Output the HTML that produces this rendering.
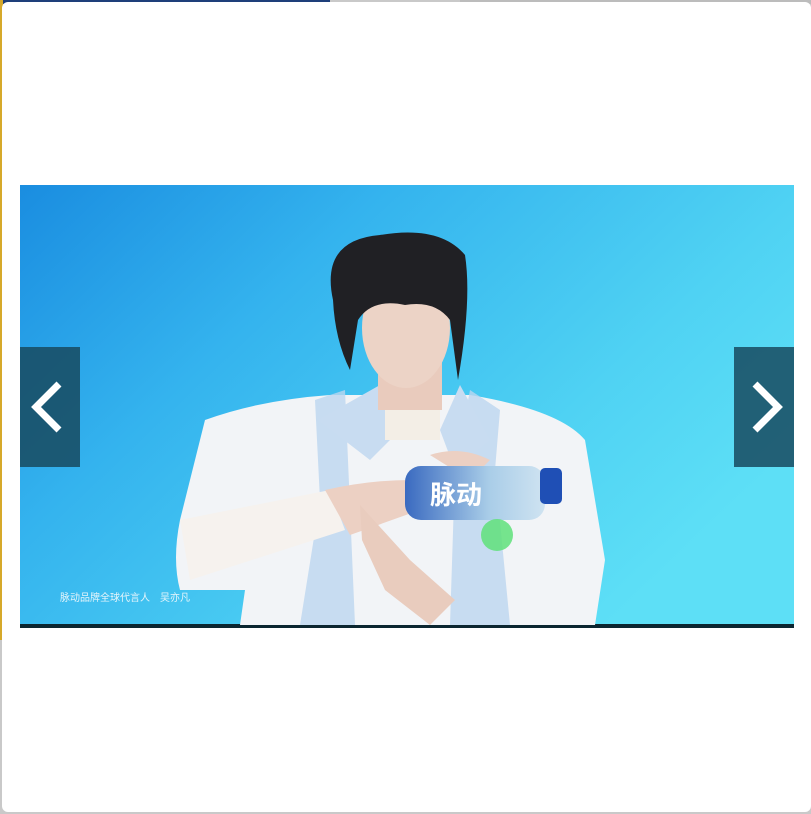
<!DOCTYPE html>
<html><head><meta charset="utf-8"><style>
html,body{margin:0;padding:0;width:811px;height:814px;overflow:hidden;background:#c9c9c9;font-family:"Liberation Sans","Noto Sans CJK SC",sans-serif}
</style></head><body>
<svg width="811" height="814" viewBox="0 0 811 814" style="position:absolute;left:0;top:0">
<defs>
<linearGradient id="bg" x1="0" y1="0" x2="1" y2="0.6">
<stop offset="0" stop-color="#1a8de0"/><stop offset="0.35" stop-color="#34b3ee"/><stop offset="0.75" stop-color="#4fd2f3"/><stop offset="1" stop-color="#5ddff6"/></linearGradient>
<linearGradient id="btl" x1="0" y1="0" x2="1" y2="0"><stop offset="0" stop-color="#3a6ac0"/><stop offset="0.6" stop-color="#a9cde8"/><stop offset="1" stop-color="#cfe3f1"/></linearGradient>
</defs>
<rect x="0" y="0" width="330" height="4" fill="#1e3f7a"/>
<rect x="0" y="0" width="3" height="640" fill="#d6a92a"/>
<rect x="460" y="0" width="351" height="4" fill="#bcbcbc"/>
<rect x="2" y="2" width="809" height="810" rx="6" fill="#fff"/>
<rect x="20" y="185" width="774" height="441" fill="url(#bg)"/>
<rect x="20" y="624" width="774" height="4" fill="#0b2630"/>
<path d="M205 420 Q260 400 330 395 L470 395 Q560 410 585 440 L605 560 L595 625 L240 625 L245 590 L180 590 Q172 560 180 520 Z" fill="#f2f4f7"/>
<path d="M315 400 L345 390 L355 625 L300 625 L320 500 Z" fill="#bcd6ef" opacity="0.8"/>
<path d="M470 390 L500 410 L495 470 L510 625 L450 625 L455 470 Z" fill="#bcd6ef" opacity="0.8"/>
<path d="M318 420 L380 385 L400 430 L370 460 Z" fill="#c8dcf1"/>
<path d="M460 385 L490 440 L455 470 L440 430 Z" fill="#c8dcf1"/>
<rect x="385" y="400" width="55" height="40" fill="#f3eee6"/>
<rect x="378" y="360" width="64" height="50" fill="#e9cbbd"/>
<ellipse cx="406" cy="328" rx="44" ry="60" fill="#ecd3c6"/>
<path d="M333 300 Q320 240 380 235 Q440 225 465 255 Q472 300 458 380 L450 320 Q435 300 405 305 Q372 298 358 320 L350 370 Q335 340 333 300 Z" fill="#202024"/>
<path d="M180 520 L330 490 L345 530 L190 580 Z" fill="#f6f2ee"/>
<path d="M325 490 Q370 480 410 480 L420 510 L350 535 Z" fill="#ecd0c3"/>
<path d="M360 505 L410 560 L455 600 L430 625 L385 590 L362 540 Z" fill="#e9ccbe"/>
<path d="M430 455 Q460 445 490 460 L470 480 Z" fill="#ecd0c3"/>
<rect x="405" y="466" width="140" height="54" rx="16" fill="url(#btl)"/>
<rect x="540" y="468" width="22" height="36" rx="5" fill="#1f4fb5"/>
<text x="430" y="504" font-size="26" font-weight="bold" fill="#fff" font-family="Noto Sans CJK SC,sans-serif">脉动</text>
<circle cx="497" cy="535" r="16" fill="#5fe07a" opacity="0.85"/>
<text x="60" y="601" font-size="10" fill="#e6f5fb" font-family="Noto Sans CJK SC,sans-serif">脉动品牌全球代言人　吴亦凡</text>
<rect x="20" y="347" width="60" height="120" fill="#174a5f" opacity="0.85"/>
<rect x="734" y="347" width="60" height="120" fill="#174a5f" opacity="0.85"/>
<path d="M59 384 L36 407 L59 430" stroke="#fff" stroke-width="7" fill="none"/>
<path d="M755 384 L778 407 L755 430" stroke="#fff" stroke-width="7" fill="none"/>
</svg>
</body></html>
